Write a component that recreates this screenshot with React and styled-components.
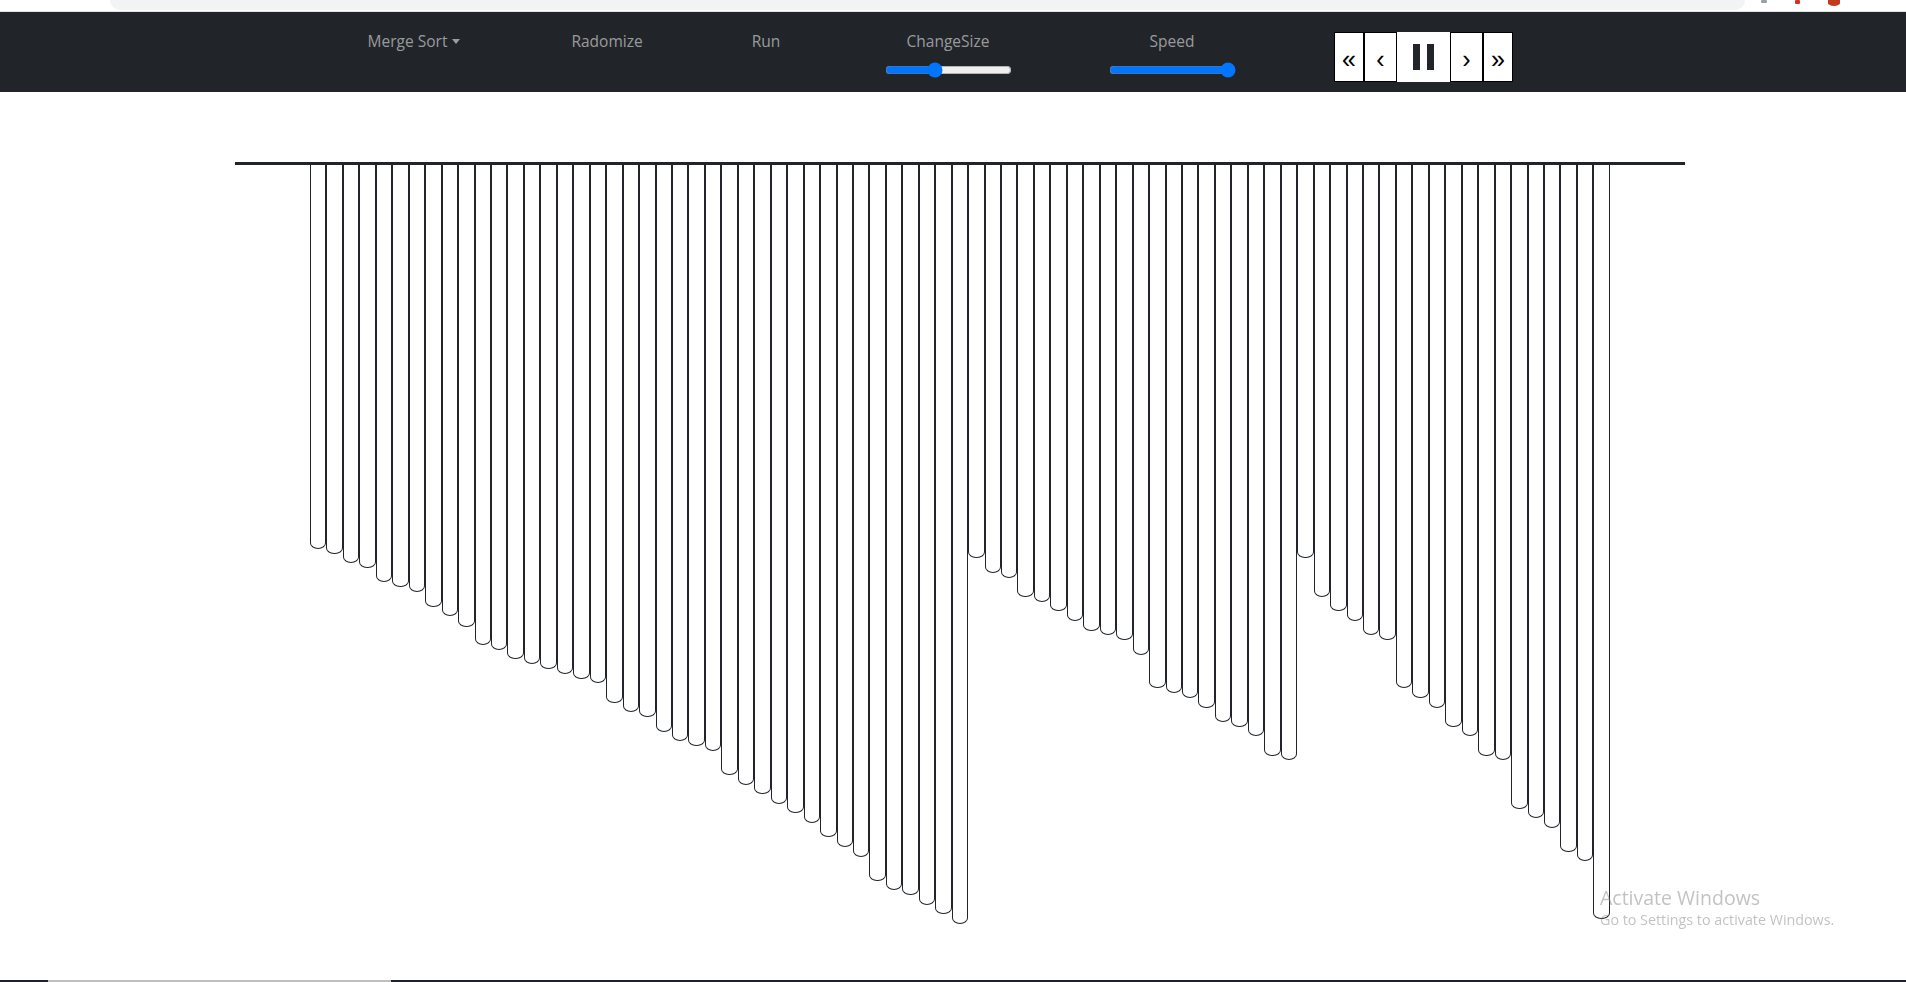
import React from 'react';
import styled, { createGlobalStyle } from 'styled-components';

const GlobalStyle = createGlobalStyle`
  html, body {
    margin: 0;
    padding: 0;
    background: #fff;
    overflow: hidden;
  }
  * {
    box-sizing: border-box;
  }
`;

// bottom edge (page y) of each bar, read off the sort state
const BAR_BOTTOMS = [
  549, 554, 563, 568, 582, 587, 592, 607, 616, 627, 645, 650, 659, 664, 669,
  674, 679, 683, 703, 712, 717, 732, 741, 746, 751, 775, 785, 794, 804, 813,
  823, 837, 847, 857, 881, 890, 895, 905, 914, 924, 558, 573, 578, 597, 602,
  611, 621, 631, 635, 640, 655, 688, 693, 698, 708, 722, 727, 736, 756, 760,
  558, 597, 611, 621, 635, 640, 688, 698, 708, 727, 736, 756, 760, 809, 818,
  828, 852, 861, 919,
];
const CHART_TOP = 165;

const Page = styled.div`
  min-height: 100vh;
  display: flex;
  flex-direction: column;
  font-family: 'Open Sans', 'Noto Sans', sans-serif;
`;

const BrowserStrip = styled.div`
  height: 12px;
  background: #fff;
  border-bottom: 1px solid #e3e3e3;
  display: flex;
  align-items: flex-start;
  padding-left: 110px;
`;

const AddressBar = styled.div`
  width: 1635px;
  height: 10px;
  background: #f1f3f4;
  border-radius: 0 0 10px 10px;
`;

const StripIcons = styled.div`
  display: flex;
  align-items: flex-start;
  gap: 28px;
  margin-left: 16px;
`;

const StripIcon = styled.span`
  display: block;
  width: ${(p) => p.$w}px;
  height: ${(p) => p.$h}px;
  background: ${(p) => p.$color};
  border-radius: ${(p) => (p.$round ? '0 0 50% 50%' : '1px')};
`;

const Navbar = styled.nav`
  height: 80px;
  background: #212529;
  display: flex;
  align-items: flex-start;
  padding: 17px 0 0 318px;
`;

const NavItem = styled.div`
  width: ${(p) => p.$width}px;
  display: flex;
  flex-direction: column;
  align-items: center;
`;

const NavLabel = styled.span`
  font-size: 15.5px;
  line-height: 24px;
  color: rgba(255, 255, 255, 0.55);
  white-space: nowrap;
`;

const Caret = styled.span`
  display: inline-block;
  margin-left: 5px;
  vertical-align: 3px;
  border-top: 5px solid rgba(255, 255, 255, 0.55);
  border-left: 4px solid transparent;
  border-right: 4px solid transparent;
`;

const Range = styled.input.attrs({ type: 'range' })`
  width: 127px;
  height: 16px;
  margin: 9px 0 0;
  accent-color: #0075ff;
`;

const ButtonGroup = styled.div`
  display: flex;
  margin: 3px 0 0 58px;
`;

const CtrlButton = styled.button`
  width: ${(p) => p.$width}px;
  height: 50px;
  padding: 4px 0 0;
  background: #fff;
  border: 1px solid ${(p) => (p.$plain ? '#fff' : '#000')};
  color: #000;
  font-family: 'Liberation Sans', Arial, sans-serif;
  font-size: 25px;
  line-height: 1;
  display: flex;
  align-items: center;
  justify-content: center;
  gap: 7px;
`;

const PauseBar = styled.span`
  display: block;
  width: 7px;
  height: 26px;
  background: #212529;
  margin-top: -4px;
`;

const Chart = styled.section`
  width: 1450px;
  margin: 70px 0 0 235px;
  border-top: 3px solid #212529;
  padding: 0 75px;
  display: flex;
  align-items: flex-start;
`;

const Bar = styled.div`
  flex: 1;
  border: 1px solid #212529;
  border-top: none;
  border-radius: 0 0 8px 8px / 0 0 6px 6px;
  background: #fff;
`;

const Spacer = styled.div`
  flex: 1;
`;

const Taskbar = styled.div`
  height: 2px;
  display: flex;
  background: #1c2230;
`;

const TaskbarItem = styled.span`
  display: block;
  width: 343px;
  margin-left: 48px;
  background: #bfbfbf;
`;

const Watermark = styled.div`
  position: fixed;
  left: 1600px;
  top: 886px;
  font-family: 'Open Sans', 'Noto Sans', sans-serif;
  color: rgba(120, 120, 120, 0.45);
  pointer-events: none;
`;

const WatermarkTitle = styled.div`
  font-size: 19.5px;
  line-height: 24px;
`;

const WatermarkText = styled.div`
  font-size: 14.3px;
  line-height: 20px;
`;

export default function App() {
  return (
    <>
      <GlobalStyle />
      <Page>
        <BrowserStrip>
          <AddressBar />
          <StripIcons>
            <StripIcon $w={6} $h={3} $color="#9aa0a6" />
            <StripIcon $w={5} $h={4} $color="#d93025" />
            <StripIcon $w={12} $h={6} $color="#c5391c" $round />
          </StripIcons>
        </BrowserStrip>

        <Navbar>
          <NavItem $width={192}>
            <NavLabel>
              Merge Sort
              <Caret />
            </NavLabel>
          </NavItem>
          <NavItem $width={194}>
            <NavLabel>Radomize</NavLabel>
          </NavItem>
          <NavItem $width={124}>
            <NavLabel>Run</NavLabel>
          </NavItem>
          <NavItem $width={240}>
            <NavLabel>ChangeSize</NavLabel>
            <Range min={0} max={100} defaultValue={38} />
          </NavItem>
          <NavItem $width={208}>
            <NavLabel>Speed</NavLabel>
            <Range min={0} max={100} defaultValue={100} />
          </NavItem>

          <ButtonGroup>
            <CtrlButton $width={30}>«</CtrlButton>
            <CtrlButton $width={33}>‹</CtrlButton>
            <CtrlButton $width={53} $plain>
              <PauseBar />
              <PauseBar />
            </CtrlButton>
            <CtrlButton $width={33}>›</CtrlButton>
            <CtrlButton $width={30}>»</CtrlButton>
          </ButtonGroup>
        </Navbar>

        <Chart>
          {BAR_BOTTOMS.map((bottom, i) => (
            <Bar key={i} style={{ height: bottom - CHART_TOP }} />
          ))}
        </Chart>

        <Spacer />
        <Taskbar>
          <TaskbarItem />
        </Taskbar>
      </Page>

      <Watermark>
        <WatermarkTitle>Activate Windows</WatermarkTitle>
        <WatermarkText>Go to Settings to activate Windows.</WatermarkText>
      </Watermark>
    </>
  );
}
